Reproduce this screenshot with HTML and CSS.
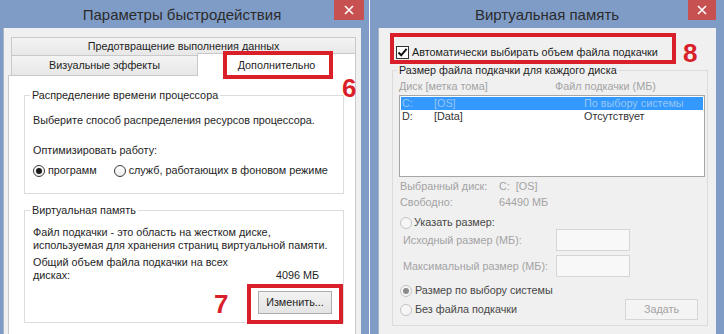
FILE: index.html
```html
<!DOCTYPE html>
<html>
<head>
<meta charset="UTF-8">
<title>Параметры быстродействия / Виртуальная память</title>
<link rel="stylesheet" href="styles.css">
</head>
<body>
<div class="screen">

	<!-- окно 1 : параметры быстродействия -->
	<div class="win win-perf">
		<div class="titlebar">Параметры быстродействия</div>
		<span class="close"><svg width="10" height="10" viewBox="0 0 10 10"><path d="M1 1L9 9M9 1L1 9" stroke="#fff" stroke-width="1.6"/></svg></span>
		<div class="body body-perf">
			<div class="tabs">
				<div class="tab tab-wide">Предотвращение выполнения данных</div>
				<div class="tabrow">
					<div class="tab tab-vis">Визуальные эффекты</div>
					<div class="tab tab-active">Дополнительно</div>
				</div>
			</div>
			<div class="panel">
				<fieldset class="group group-cpu">
					<legend>Распределение времени процессора</legend>
					<p class="cpu-desc">Выберите способ распределения ресурсов процессора.</p>
					<p class="cpu-opt">Оптимизировать работу:</p>
					<div class="radios">
						<span class="opt"><i class="radio radio-on"></i>программ</span>
						<span class="opt"><i class="radio"></i>служб, работающих в фоновом режиме</span>
					</div>
				</fieldset>
				<fieldset class="group group-vm">
					<legend>Виртуальная память</legend>
					<p class="vm-desc">Файл подкачки - это область на жестком диске,<br>используемая для хранения страниц виртуальной памяти.</p>
					<p class="vm-total">Общий объем файла подкачки на всех</p>
					<div class="vm-size"><span>дисках:</span><span class="mb">4096 МБ</span></div>
					<div class="btnrow"><button class="btn btn-change" type="button">Изменить...</button></div>
				</fieldset>
			</div>
		</div>
		<!-- пометки поверх окна -->
		<span class="mark mark-tab"></span>
		<span class="num num-6">6</span>
		<span class="mark mark-btn"></span>
		<span class="num num-7">7</span>
	</div>

	<!-- окно 2 : виртуальная память -->
	<div class="win win-vm">
		<div class="titlebar">Виртуальная память</div>
		<span class="close"><svg width="10" height="10" viewBox="0 0 10 10"><path d="M1 1L9 9M9 1L1 9" stroke="#fff" stroke-width="1.6"/></svg></span>
		<div class="body body-vm">
			<label class="auto"><i class="check"><svg width="11" height="11" viewBox="0 0 11 11"><path d="M1.5 5.5L4.2 8.3L9.6 1.8" fill="none" stroke="#111" stroke-width="2"/></svg></i>Автоматически выбирать объем файла подкачки</label>
			<fieldset class="group group-disk">
				<legend>Размер файла подкачки для каждого диска</legend>
				<div class="cols muted"><span>Диск [метка тома]</span><span>Файл подкачки (МБ)</span></div>
				<div class="list">
					<div class="row row-sel"><span>C:</span><span>[OS]</span><span>По выбору системы</span></div>
					<div class="row"><span>D:</span><span>[Data]</span><span>Отсутствует</span></div>
				</div>
				<div class="info info-first muted"><span>Выбранный диск:</span><span>C:&nbsp; [OS]</span></div>
				<div class="info muted"><span>Свободно:</span><span>64490 МБ</span></div>
				<div class="opt opt-size"><i class="radio radio-off"></i>Указать размер:</div>
				<div class="field muted"><span>Исходный размер (МБ):</span><input class="num-input" type="text" disabled></div>
				<div class="field field-max muted"><span>Максимальный размер (МБ):</span><input class="num-input" type="text" disabled></div>
				<div class="opt opt-sys"><i class="radio radio-off radio-dot"></i>Размер по выбору системы</div>
				<div class="lastrow">
					<div class="opt opt-none"><i class="radio radio-off"></i>Без файла подкачки</div>
					<button class="btn btn-set" type="button" disabled>Задать</button>
				</div>
			</fieldset>
		</div>
		<span class="mark mark-auto"></span>
		<span class="num num-8">8</span>
	</div>

</div>
</body>
</html>
```

FILE: styles.css
```css
* { box-sizing: border-box; }

body {
	margin: 0;
	background: #fff;
	font: 10.8px/13px "Liberation Sans", Arial, sans-serif;
	color: #1e1e1e;
	white-space: nowrap; }
p { margin: 0; }

.screen {
	display: flex;
	gap: 1px;
	width: 724px;
	height: 334px;
	overflow: hidden; }

/* окна */
.win {
	position: relative;
	display: flex;
	flex-direction: column;
	background: #7f9cc7; }
.win-perf { width: 369px; padding: 0 8px 0 3px; }
.win-vm { width: 354px; padding: 0 8px; }

.titlebar {
	flex: none;
	height: 28px;
	display: flex;
	align-items: center;
	justify-content: center;
	font-size: 15px;
	color: #2b2b2b; }
.close {
	position: absolute;
	top: 0;
	height: 20px;
	background: #c75050;
	display: flex;
	align-items: center;
	justify-content: center; }
.win-perf .close { right: 5px; width: 30px; }
.win-vm .close { right: 8px; width: 28px; }

.body {
	flex: 1;
	display: flex;
	flex-direction: column;
	background: #f0f0f0;
	border-left: 1px solid #a9b4c4; }
.body-perf { padding-top: 9px; }

/* вкладки */
.tabs { margin-left: 7px; width: 345px; }
.tab {
	display: flex;
	align-items: center;
	justify-content: center;
	border: 1px solid #c9c9c9;
	background: linear-gradient(#f4f4f4, #e7e7e7); }
.tab-wide { height: 19px; }
.tabrow { display: flex; height: 20px; margin-top: -1px; }
.tab-vis { width: 187px; border-bottom: 0; }
.tab-active {
	position: relative;
	z-index: 1;
	width: 159px;
	height: 23px;
	margin: -2px 0 0 -1px;
	background: #fff;
	border-bottom: 0; }

.panel {
	flex: 1;
	margin-left: 4px;
	width: 348px;
	background: #fff;
	border: 1px solid #c9c9c9;
	border-bottom: 0;
	padding-left: 15px; }

/* рамки групп */
.group {
	margin: 0;
	min-width: 0;
	border: 1px solid #dcdcdc;
	padding: 0 10px 0 8px; }
.group legend { padding: 0 2px; margin-left: -3px; }

.group-cpu { width: 320px; margin-top: 13px; padding-bottom: 16px; }
.cpu-desc { margin-top: 12px; }
.cpu-opt { margin-top: 17px; }
.radios { display: flex; gap: 17px; margin-top: 7px; }

.group-vm { width: 320px; margin-top: 10px; padding-bottom: 8px; }
.vm-desc { margin-top: 9px; }
.vm-total { margin-top: 4px; }
.vm-size { display: flex; justify-content: space-between; padding-right: 14px; }
.btnrow { display: flex; justify-content: flex-end; margin-top: 9px; }

/* радиокнопки и флажок */
.opt { display: flex; align-items: center; gap: 3px; }
.radio {
	flex: none;
	width: 12px;
	height: 12px;
	border-radius: 50%;
	border: 1px solid #3c3c3c;
	background: linear-gradient(#fff, #ececec);
	display: flex;
	align-items: center;
	justify-content: center; }
.radio-on::after {
	content: "";
	width: 6px;
	height: 6px;
	border-radius: 50%;
	background: #1a1a1a; }
.radio-off { border-color: #c3c3c3; background: #f6f6f6; }
.radio-dot::after {
	content: "";
	width: 6px;
	height: 6px;
	border-radius: 50%;
	background: #8a8a8a; }

.check {
	flex: none;
	width: 13px;
	height: 13px;
	border: 1px solid #333;
	background: #fff;
	display: flex;
	align-items: center;
	justify-content: center; }

/* кнопки */
.btn {
	font: inherit;
	color: #1e1e1e;
	padding: 0;
	border: 1px solid #adadad;
	background: linear-gradient(#f2f2f2, #e4e4e4); }
.btn-change { width: 74px; height: 23px; margin-right: 1px; }
.btn-set {
	width: 73px;
	height: 21px;
	margin-right: 7px;
	color: #a3a3a3;
	border-color: #d6d6d6;
	background: #f4f4f4; }

/* окно виртуальной памяти */
.auto {
	display: flex;
	align-items: center;
	gap: 3px;
	height: 13px;
	margin: 18px 0 0 17px; }

.group-disk {
	width: 316px;
	margin: 5px 0 0 13px;
	padding: 0 2px 5px 6px; }
.group-disk legend { margin-left: -2px; }
.muted { color: #a3a3a3; }

.cols { display: grid; grid-template-columns: 156px 1fr; margin-top: 3px; }

.list {
	margin-top: 2px;
	height: 82px;
	border: 1px solid #a6a6a6;
	background: #fff;
	padding: 1px; }
.row {
	display: grid;
	grid-template-columns: 32px 150px 1fr;
	height: 13px;
	padding-left: 1px;
	color: #333; }
.row-sel { background: #3399ff; color: #98c6f2; }

.info { display: grid; grid-template-columns: 99px 1fr; padding-left: 1px; margin-top: 3px; }
.opt-size { margin-top: 7px; padding-left: 1px; gap: 2px; color: #474747; }

.field {
	display: grid;
	grid-template-columns: 153px 74px;
	align-items: center;
	height: 22px;
	padding-left: 4px; }
.field-max { margin-top: 4px; }
.num-input {
	width: 74px;
	height: 22px;
	border: 1px solid #d6d6d6;
	background: #f8f8f8; }

.opt-sys { margin-top: 7px; padding-left: 1px; color: #474747; }
.lastrow {
	display: flex;
	justify-content: space-between;
	align-items: center;
	margin-top: 2px; }
.opt-none { padding-left: 1px; color: #474747; }

/* красные пометки поверх скриншота */
.mark {
	position: absolute;
	z-index: 2;
	border: 4px solid #d91f2a; }
.mark-tab { left: 223px; top: 51px; width: 110px; height: 28px; }
.mark-btn { left: 247px; top: 284px; width: 96px; height: 40px; }
.mark-auto { left: 20px; top: 33px; width: 286px; height: 31px; }

.num {
	position: absolute;
	z-index: 2;
	font: bold 26px/26px "Liberation Sans", Arial, sans-serif;
	color: #d91f2a; }
.num-6 { left: 342px; top: 75px; }
.num-7 { left: 214px; top: 291px; }
.num-8 { left: 313px; top: 40px; }
```
